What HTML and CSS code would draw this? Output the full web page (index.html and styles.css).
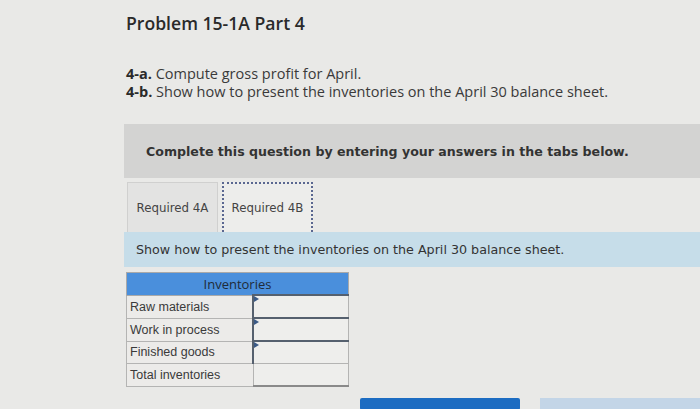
FILE: index.html
```html
<!DOCTYPE html>
<html>
<head>
<meta charset="utf-8">
<link rel="stylesheet" href="styles.css">
</head>
<body>
<div class="page">
  <h1 class="title">Problem 15-1A Part 4</h1>
  <div class="reqs">
    <p><b>4-a.</b> Compute gross profit for April.</p>
    <p><b>4-b.</b> Show how to present the inventories on the April 30 balance sheet.</p>
  </div>
  <div class="banner">Complete this question by entering your answers in the tabs below.</div>
  <div class="tabs">
    <div class="tab">Required 4A</div>
    <div class="tab active">Required 4B</div>
  </div>
  <div class="instr">Show how to present the inventories on the April 30 balance sheet.</div>
  <table class="inv">
    <tr><th colspan="2">Inventories</th></tr>
    <tr><td class="lbl">Raw materials</td><td class="in"><span class="mark"></span></td></tr>
    <tr><td class="lbl">Work in process</td><td class="in"><span class="mark"></span></td></tr>
    <tr><td class="lbl">Finished goods</td><td class="in"><span class="mark"></span></td></tr>
    <tr><td class="lbl">Total inventories</td><td class="in total"></td></tr>
  </table>
  <div class="buttons">
    <div class="btn prev"></div>
    <div class="btn next"></div>
  </div>
</div>
</body>
</html>
```
FILE: styles.css
```css
html, body {
  margin: 0;
  padding: 0;
  background: #e9e9e7;
  overflow: hidden;
}
.page {
  width: 700px;
  height: 409px;
  padding-left: 124px;
  box-sizing: border-box;
  font-family: "Open Sans", "Liberation Sans", sans-serif;
  color: #333;
}
.title {
  margin: 0;
  padding: 11px 0 0 2px;
  font-size: 17.6px;
  font-weight: 600;
  line-height: 24px;
  color: #2a2a2a;
}
.reqs {
  margin-top: 29px;
  padding-left: 2px;
  font-size: 14.5px;
  line-height: 20px;
  color: #3a3a3a;
}
.reqs p { margin: 0; }
.reqs p + p { margin-top: -2px; }
.reqs b { font-weight: 700; color: #2a2a2a; }
.banner {
  margin-top: 22px;
  height: 54px;
  background: #d3d3d2;
  display: flex;
  align-items: center;
  padding-left: 22px;
  font-family: "DejaVu Sans", Verdana, sans-serif;
  font-weight: 700;
  font-size: 12.6px;
  color: #333;
}
.tabs {
  display: flex;
  gap: 4px;
  margin-top: 4px;
  padding-left: 3px;
  height: 50px;
}
.tab {
  width: 91px;
  box-sizing: border-box;
  display: flex;
  align-items: center;
  justify-content: center;
  font-family: "DejaVu Sans", Verdana, sans-serif;
  font-size: 11.8px;
  color: #444;
  background: #e3e3e2;
  border: 1px solid #d0d0cf;
  border-bottom: none;
}
.tab.active {
  background: #ededeb;
  border: 2px dotted #5a6790;
  border-bottom: none;
}
.instr {
  height: 35px;
  background: #c6dde9;
  display: flex;
  align-items: center;
  padding-left: 12px;
  font-family: "DejaVu Sans", Verdana, sans-serif;
  font-size: 12.7px;
  color: #333;
}
.inv {
  margin-top: 5px;
  margin-left: 2px;
  border-collapse: collapse;
  font-family: "Liberation Sans", Arial, sans-serif;
  font-size: 12.5px;
  color: #3a3a3a;
  border: 1px solid #a9a9a9;
}
.inv th {
  background: #4a8fdc;
  height: 21px;
  padding: 0;
  font-weight: 500;
  font-family: "Open Sans", "Liberation Sans", sans-serif;
  font-size: 13px;
  color: #1f2b38;
  border: 1px solid #a9a9a9;
}
.inv td {
  height: 21px;
  padding: 0;
  border: 1px solid #b4b4b3;
  background: #ecebe9;
}
.inv td.lbl {
  width: 122px;
  padding-left: 3px;
}
.inv td.in {
  width: 94px;
  position: relative;
  border-top: 2px solid #55606e;
  border-left: 2px solid #55606e;
  background: #eeeeec;
}
.inv td.total {
  border-top: 1px solid #b4b4b3;
  border-left: 1px solid #b4b4b3;
  border-bottom: 2px solid #8a8a8a;
}
.mark {
  position: absolute;
  left: 0;
  top: 0;
  width: 0;
  height: 0;
  border-top: 3px solid transparent;
  border-bottom: 3px solid transparent;
  border-left: 5px solid #3b5a86;
}
.buttons {
  display: flex;
  margin-top: 11px;
  padding-left: 236px;
  gap: 20px;
}
.btn {
  height: 12px;
}
.btn.prev {
  width: 160px;
  background: #1c6cc2;
  border-radius: 2px;
}
.btn.next {
  width: 160px;
  background: #c3d5e7;
}
```
